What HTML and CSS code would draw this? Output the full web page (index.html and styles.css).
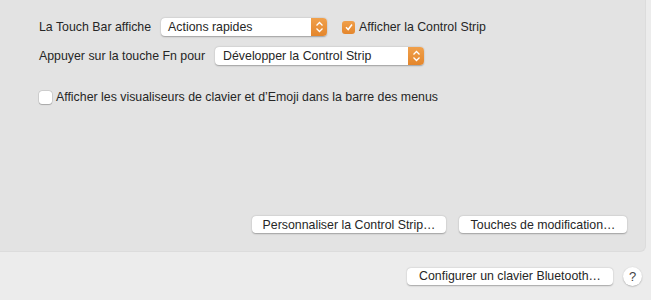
FILE: index.html
```html
<!DOCTYPE html>
<html lang="fr">
<head>
    <meta charset="UTF-8">
    <title>Clavier</title>
    <link rel="stylesheet" href="styles.css">
</head>
<body>
    <div class="panel">
        <div class="row row-first">
            <span class="label">La Touch Bar affiche</span>
            <div class="select select-touch">
                <span class="select-text">Actions rapides</span>
                <span class="select-arrows">
                    <svg width="9" height="12" viewBox="0 0 9 12"><path d="M1.5 4.5 L4.5 1.5 L7.5 4.5 M1.5 7.5 L4.5 10.5 L7.5 7.5" fill="none" stroke="#fff" stroke-width="1.3"/></svg>
                </span>
            </div>
            <label class="check">
                <span class="box box-on">
                    <svg width="10" height="10" viewBox="0 0 10 10"><path d="M2 5.2 L4.2 7.5 L8 2.5" fill="none" stroke="#fff" stroke-width="1.5"/></svg>
                </span>
                <span>Afficher la Control Strip</span>
            </label>
        </div>
        <div class="row">
            <span class="label">Appuyer sur la touche Fn pour</span>
            <div class="select select-fn">
                <span class="select-text">Développer la Control Strip</span>
                <span class="select-arrows">
                    <svg width="9" height="12" viewBox="0 0 9 12"><path d="M1.5 4.5 L4.5 1.5 L7.5 4.5 M1.5 7.5 L4.5 10.5 L7.5 7.5" fill="none" stroke="#fff" stroke-width="1.3"/></svg>
                </span>
            </div>
        </div>
        <label class="check check-menu">
            <span class="box"></span>
            <span>Afficher les visualiseurs de clavier et d’Emoji dans la barre des menus</span>
        </label>
        <div class="actions">
            <button class="btn btn-strip">Personnaliser la Control Strip…</button>
            <button class="btn btn-mod">Touches de modification…</button>
        </div>
    </div>
    <div class="footer">
        <button class="btn btn-bt">Configurer un clavier Bluetooth…</button>
        <button class="help">?</button>
    </div>
</body>
</html>
```
FILE: styles.css
```css
body{
    margin: 0;
    width: 651px;
    height: 300px;
    background-color: #ececec;
    font-family: "Liberation Sans", Arial, sans-serif;
    font-size: 12.35px;
    color: #262626;
    overflow: hidden;
}
/* panneau principal */
.panel{
    box-sizing: border-box;
    width: 646px;
    height: 252px;
    background-color: #e3e3e3;
    border-right: 1px solid #dcdcdc;
    border-bottom: 1px solid #dcdcdc;
    border-bottom-right-radius: 6px;
    padding: 18px 18px 18px 39px;
    display: flex;
    flex-direction: column;
}

.row{
    display: flex;
    align-items: center;
    height: 18px;
    margin-top: 11px;
}
.row-first{
    margin-top: 0;
}

.label{
    margin-right: 10px;
}
/* menus déroulants */
.select{
    box-sizing: border-box;
    height: 18px;
    display: flex;
    align-items: center;
    background-color: #fff;
    border-radius: 4px;
    box-shadow: 0 0.5px 1.5px rgba(0,0,0,0.3);
}
.select-touch{
    width: 166px;
}
.select-touch .select-text{
    padding-left: 7px;
}
.select-fn{
    width: 209px;
}
.select-text{
    flex: 1;
    padding-left: 8px;
}
.select-arrows{
    width: 16px;
    height: 18px;
    display: flex;
    align-items: center;
    justify-content: center;
    background: linear-gradient(#f0a04b, #e4862c);
    border-radius: 0 4px 4px 0;
}
/* cases à cocher */
.check{
    display: flex;
    align-items: center;
}
.row-first .check{
    margin-left: 15px;
}
.box{
    box-sizing: border-box;
    width: 13px;
    height: 13px;
    margin-right: 4px;
    border-radius: 3px;
    background-color: #fff;
    box-shadow: 0 0 0 0.5px rgba(0,0,0,0.15), 0 0.5px 1px rgba(0,0,0,0.2);
    display: flex;
    align-items: center;
    justify-content: center;
}
.box-on{
    background: linear-gradient(#f0a04b, #e4862c);
    box-shadow: none;
}
.check-menu{
    margin-top: 25px;
}
/* boutons */
.actions{
    margin-top: auto;
    display: flex;
    justify-content: flex-end;
    gap: 13px;
}

.btn{
    box-sizing: border-box;
    height: 17px;
    padding: 0;
    border: none;
    border-radius: 4px;
    background-color: #fff;
    box-shadow: 0 0.5px 1.5px rgba(0,0,0,0.3);
    font-family: inherit;
    font-size: inherit;
    color: inherit;
}
.btn-strip{
    width: 194px;
}
.btn-mod{
    width: 168px;
}

.footer{
    height: 48px;
    display: flex;
    align-items: center;
    justify-content: flex-end;
    padding-right: 9px;
    gap: 10px;
}
.btn-bt{
    width: 206px;
}
.help{
    width: 19px;
    height: 19px;
    padding: 0;
    border: none;
    border-radius: 50%;
    background-color: #fff;
    box-shadow: 0 0.5px 1.5px rgba(0,0,0,0.3);
    font-family: inherit;
    font-size: 13px;
    color: #444;
}
```
